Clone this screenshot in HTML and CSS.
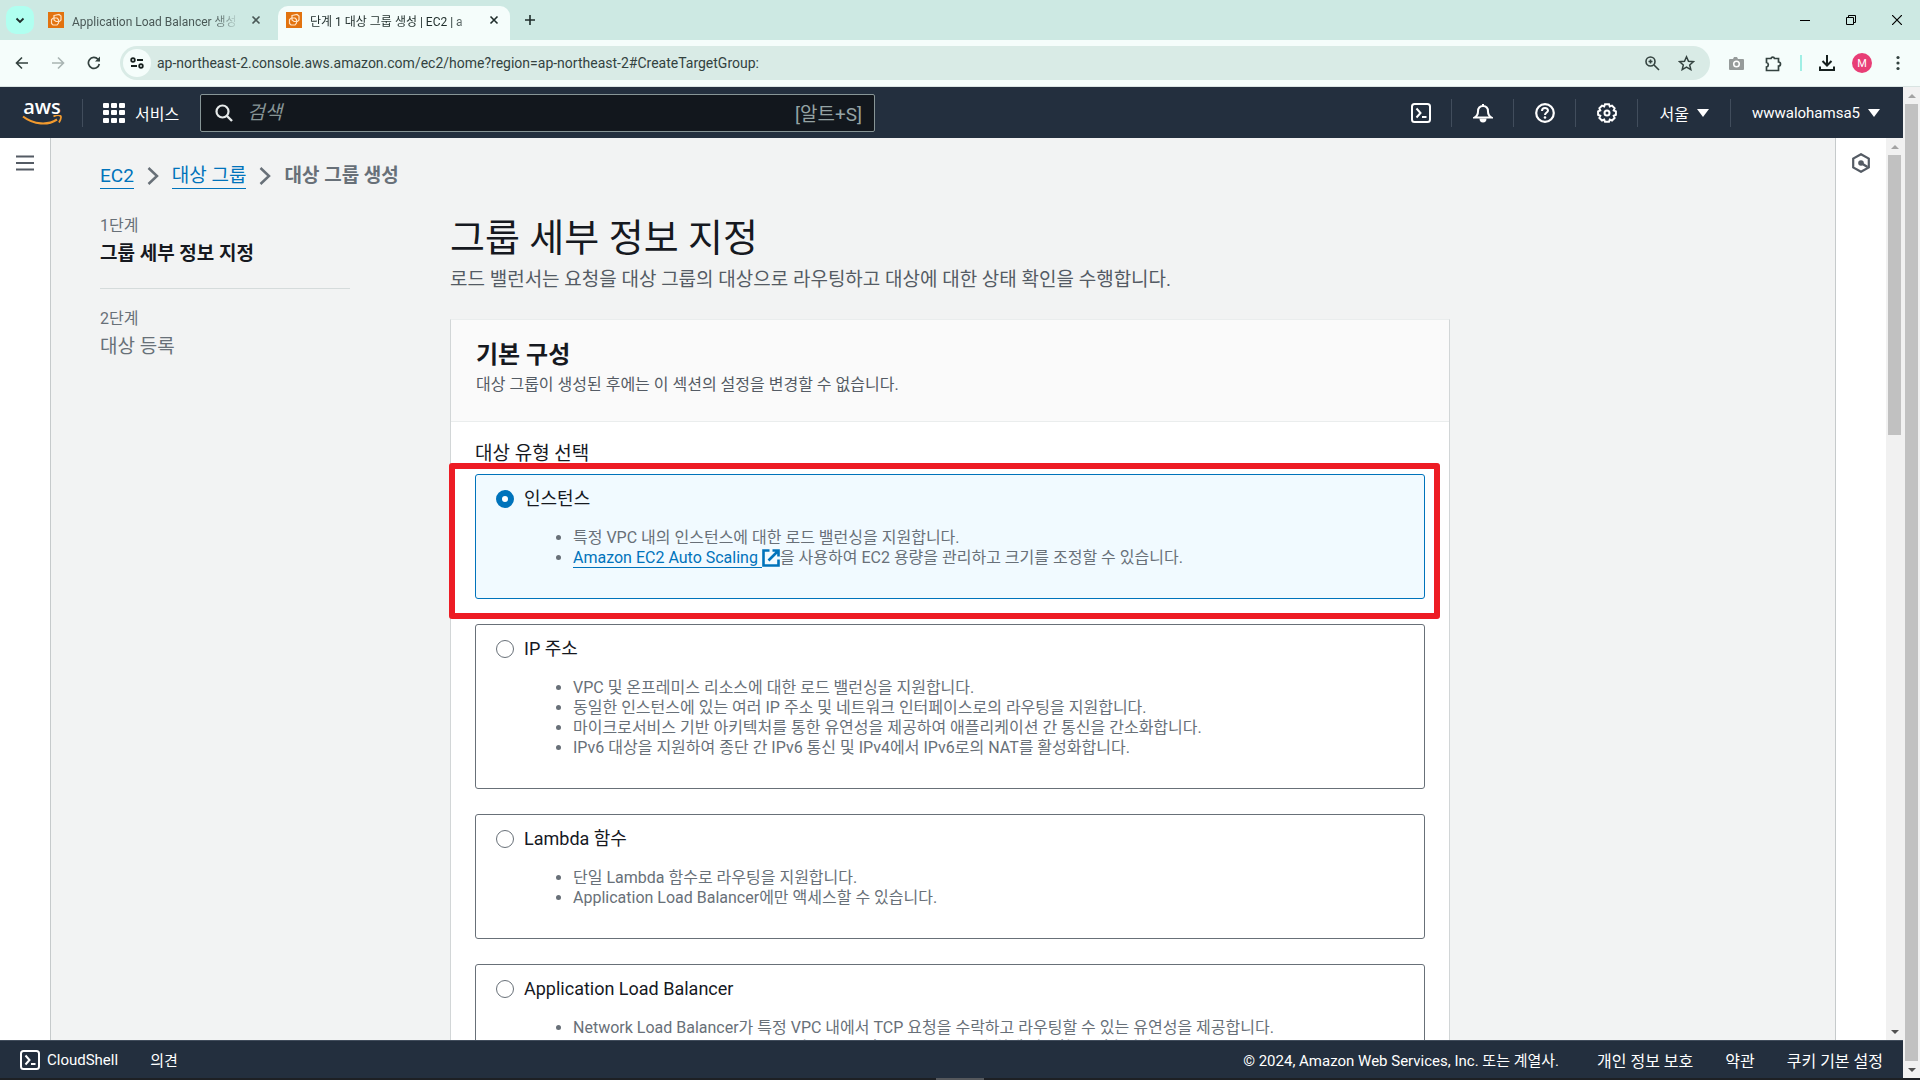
FILE: index.html
```html
<!DOCTYPE html>
<html lang="ko">
<head>
<meta charset="utf-8">
<title>단계 1 대상 그룹 생성 | EC2</title>
<link rel="stylesheet" href="styles.css">
</head>
<body>
<svg class="defs" aria-hidden="true">
  <symbol id="ec2" viewBox="0 0 16 16"><rect width="16" height="16" fill="#e2730f"/><g fill="none" stroke="#ffe3c4" stroke-width="1.2"><path d="M6 3.5 11 2.5 13 4v4l-1.5 1.5H8L6 8z"/><path d="M5.500 6 3.500 7.500v4L5 13h4l1.500-2V7.500L9 6z"/></g></symbol>
  <symbol id="shell" viewBox="0 0 20 20"><g fill="none" stroke="currentColor" stroke-width="2"><rect x="1" y="1" width="18" height="18" rx="2.500"/><path d="m5.500 5.500 4 4.500-4 4.500M11 14h4.500"/></g></symbol>
  <symbol id="x" viewBox="0 0 10 10"><path d="m1.500 1.500 7 7m0-7-7 7" fill="none" stroke="currentColor" stroke-width="1.600"/></symbol>
  <symbol id="chev" viewBox="0 0 12 20"><path d="m1.500 2 8.500 8-8.500 8" fill="none" stroke="currentColor" stroke-width="2.500"/></symbol>
</svg>

<div class="tabstrip">
  <button class="tab-search" aria-label="탭 검색"><svg width="10" height="7" viewBox="0 0 10 7"><path d="m1.500 1.500 3.500 3.500 3.500-3.500" fill="none" stroke="currentColor" stroke-width="1.800"/></svg></button>
  <div class="tab">
    <svg width="16" height="16"><use href="#ec2"/></svg>
    <span class="tab-title">Application Load Balancer 생성</span>
    <button class="tab-close" aria-label="탭 닫기"><svg width="10" height="10"><use href="#x"/></svg></button>
  </div>
  <div class="tab active">
    <svg width="16" height="16"><use href="#ec2"/></svg>
    <span class="tab-title">단계 1 대상 그룹 생성 | EC2 | a</span>
    <button class="tab-close" aria-label="탭 닫기"><svg width="10" height="10"><use href="#x"/></svg></button>
  </div>
  <button class="new-tab" aria-label="새 탭"><svg width="12" height="12" viewBox="0 0 12 12"><path d="M6 1v10M1 6h10" stroke="currentColor" stroke-width="1.600"/></svg></button>
  <div class="window-controls">
    <button aria-label="최소화"><svg width="10" height="10" viewBox="0 0 10 10"><path d="M0 5.500h10" stroke="currentColor"/></svg></button>
    <button aria-label="이전 크기로 복원"><svg width="10" height="10" viewBox="0 0 10 10"><path d="M.5 2.500h7v7h-7zM2.500 2.500v-2h7v7h-2" fill="none" stroke="currentColor"/></svg></button>
    <button aria-label="닫기"><svg width="10" height="10" viewBox="0 0 10 10"><path d="m0 0 10 10M10 0 0 10" stroke="currentColor" stroke-width="1.200"/></svg></button>
  </div>
</div>

<div class="toolbar">
  <button class="tool" aria-label="뒤로"><svg width="14" height="14" viewBox="0 0 14 14"><path d="M13 7H2M7 1.500 1.500 7 7 12.500" fill="none" stroke="currentColor" stroke-width="1.600"/></svg></button>
  <button class="tool dim" aria-label="앞으로"><svg width="14" height="14" viewBox="0 0 14 14"><path d="M1 7h11M7 1.500 12.500 7 7 12.500" fill="none" stroke="currentColor" stroke-width="1.600"/></svg></button>
  <button class="tool" aria-label="새로고침"><svg width="14" height="14" viewBox="0 0 14 14"><path d="M12.300 8A5.500 5.500 0 1 1 11 3.200l1.500 1.600" fill="none" stroke="currentColor" stroke-width="1.700"/><path d="M13 .5v5H8z" fill="currentColor"/></svg></button>
  <div class="omnibox">
    <button class="site-info" aria-label="사이트 정보"><svg width="14" height="12" viewBox="0 0 14 12"><g fill="none" stroke="currentColor" stroke-width="1.800"><circle cx="3" cy="3" r="1.800"/><circle cx="11" cy="9" r="1.800"/><path d="M7 3h6M1 9h6"/></g></svg></button>
    <input class="url" type="text" aria-label="주소창" value="ap-northeast-2.console.aws.amazon.com/ec2/home?region=ap-northeast-2#CreateTargetGroup:">
    <button class="omni-btn" aria-label="확대/축소"><svg width="15" height="15" viewBox="0 0 15 15"><g fill="none" stroke="currentColor" stroke-width="1.600"><circle cx="5.500" cy="5.500" r="4.500"/><path d="m9 9 5 5M5.500 3.500v4M3.500 5.500h4"/></g></svg></button>
    <button class="omni-btn" aria-label="북마크"><svg width="17" height="16" viewBox="0 0 17 16"><path d="m8.500 1.800 2 4.400 4.900.5-3.700 3.200 1.100 4.700-4.300-2.500-4.300 2.500 1.100-4.700L1.600 6.700l4.900-.5z" fill="none" stroke="currentColor" stroke-width="1.500"/></svg></button>
  </div>
  <div class="extensions">
    <button class="tool camera" aria-label="캡처"><svg width="15" height="14" viewBox="0 0 15 14"><path d="M1 3h3l1-2h3l1 2h5a1 1 0 0 1 1 1v9a1 1 0 0 1-1 1H1a1 1 0 0 1-1-1V4a1 1 0 0 1 1-1z" fill="currentColor"/><circle cx="7.500" cy="8" r="2.800" fill="none" stroke="#fff" stroke-width="1.500"/></svg></button>
    <button class="tool" aria-label="확장 프로그램"><svg width="17" height="17" viewBox="0 0 17 17"><path d="M1.500 3.500H6a1.800 1.800 0 0 1 3.500 0h4V7a2 2 0 0 1 0 4v4.500h-12V12a2.300 2.300 0 0 0 0-4.500z" fill="none" stroke="currentColor" stroke-width="1.700"/></svg></button>
    <span class="tool-sep"></span>
    <button class="tool strong" aria-label="다운로드"><svg width="16" height="16" viewBox="0 0 16 16"><path d="M8 0v10M3.500 6 8 10.500 12.500 6M1 11.500V15h14v-3.500" fill="none" stroke="currentColor" stroke-width="2"/></svg></button>
    <button class="avatar" aria-label="프로필">M</button>
    <button class="tool" aria-label="메뉴"><svg width="4" height="16" viewBox="0 0 4 16" fill="currentColor"><circle cx="2" cy="2.500" r="1.600"/><circle cx="2" cy="8" r="1.600"/><circle cx="2" cy="13.500" r="1.600"/></svg></button>
  </div>
</div>

<div class="viewport">
  <div class="console">
    <header class="nav">
      <a class="logo" href="#" aria-label="aws">
        <span class="logo-text">aws</span>
        <svg width="40" height="11" viewBox="0 0 40 11"><path d="M1 1.500c11 8.500 25 9 34 3" fill="none" stroke="#f29a2e" stroke-width="2.200"/><path d="M31.500 1.500c3-1.500 6-1.500 7-.5s0 4-1.500 6.500" fill="none" stroke="#f29a2e" stroke-width="1.800"/></svg>
      </a>
      <span class="sep"></span>
      <button class="services"><svg width="22" height="20" viewBox="0 0 22 20" fill="currentColor"><rect width="6" height="5" rx="1"/><rect x="8" width="6" height="5" rx="1"/><rect x="16" width="6" height="5" rx="1"/><rect y="7" width="6" height="5" rx="1"/><rect x="8" y="7" width="6" height="5" rx="1"/><rect x="16" y="7" width="6" height="5" rx="1"/><rect y="15" width="6" height="5" rx="1"/><rect x="8" y="15" width="6" height="5" rx="1"/><rect x="16" y="15" width="6" height="5" rx="1"/></svg>서비스</button>
      <div class="search">
        <svg width="18" height="18" viewBox="0 0 18 18"><circle cx="7.500" cy="7.500" r="6" fill="none" stroke="currentColor" stroke-width="2.200"/><path d="m12 12 5 5" stroke="currentColor" stroke-width="2.400"/></svg>
        <input type="text" aria-label="검색" placeholder="검색">
        <span class="shortcut">[알트+S]</span>
      </div>
      <div class="nav-right">
        <button class="nav-icon" aria-label="CloudShell"><svg width="20" height="20"><use href="#shell"/></svg></button>
        <span class="sep"></span>
        <button class="nav-icon" aria-label="알림"><svg width="20" height="20" viewBox="0 0 20 20"><path d="M10 1v2M1.500 14.500c2.500-1.500 3.500-3 3.500-6C5 5 7 3 10 3s5 2 5 5.500c0 3 1 4.500 3.500 6z" fill="none" stroke="currentColor" stroke-width="2"/><path d="M6.500 15.500h7a3.500 4 0 0 1-7 0z" fill="currentColor"/></svg></button>
        <span class="sep"></span>
        <button class="nav-icon" aria-label="도움말"><svg width="20" height="20" viewBox="0 0 20 20"><circle cx="10" cy="10" r="8.800" fill="none" stroke="currentColor" stroke-width="2.200"/><path d="M7 8c0-4 6-3.800 6-.5 0 2-3 2-3 4.500" fill="none" stroke="currentColor" stroke-width="2"/><circle cx="10" cy="14.500" r="1.300" fill="currentColor"/></svg></button>
        <span class="sep"></span>
        <button class="nav-icon" aria-label="설정"><svg width="20" height="20" viewBox="0 0 20 20"><path d="M8 1.200h4l.8 2.200 2.200-.8 2.600 2.700-.9 2.200 2.200.9v3.400l-2.200.9.900 2.200-2.600 2.600-2.200-.9-.8 2.200H8l-.8-2.200-2.200.9-2.600-2.600.9-2.200-2.200-.9V8.400l2.200-.9-.9-2.200L5 2.600l2.200.8z" fill="none" stroke="currentColor" stroke-width="2"/><circle cx="10" cy="10" r="2.500" fill="none" stroke="currentColor" stroke-width="2"/></svg></button>
        <span class="sep"></span>
        <button class="nav-text">서울<span class="caret"></span></button>
        <span class="sep"></span>
        <button class="nav-text account">wwwalohamsa5<span class="caret"></span></button>
      </div>
    </header>

    <div class="body">
      <aside class="rail rail-left">
        <button aria-label="탐색 열기"><svg width="18" height="16" viewBox="0 0 18 16"><path d="M0 1.500h18M0 8h18M0 14.500h18" stroke="currentColor" stroke-width="2.200"/></svg></button>
      </aside>
      <main class="main">
        <nav class="crumbs" aria-label="이동 경로">
          <a href="#">EC2</a>
          <svg width="12" height="20"><use href="#chev"/></svg>
          <a href="#">대상 그룹</a>
          <svg width="12" height="20"><use href="#chev"/></svg>
          <strong>대상 그룹 생성</strong>
        </nav>
        <div class="wizard">
          <ol class="steps">
            <li><span class="step-no">1단계</span><strong>그룹 세부 정보 지정</strong></li>
            <li><span class="step-no">2단계</span><span class="step-name">대상 등록</span></li>
          </ol>
          <div class="content">
            <h1>그룹 세부 정보 지정</h1>
            <p class="lead">로드 밸런서는 요청을 대상 그룹의 대상으로 라우팅하고 대상에 대한 상태 확인을 수행합니다.</p>
            <section class="panel">
              <div class="panel-head">
                <h2>기본 구성</h2>
                <p>대상 그룹이 생성된 후에는 이 섹션의 설정을 변경할 수 없습니다.</p>
              </div>
              <fieldset class="types">
                <legend>대상 유형 선택</legend>
                <div class="card selected">
                  <div class="choice"><input type="radio" name="type" id="t1" checked><label for="t1">인스턴스</label></div>
                  <ul>
                    <li>특정 VPC 내의 인스턴스에 대한 로드 밸런싱을 지원합니다.</li>
                    <li><a href="#">Amazon EC2 Auto Scaling </a><svg class="ext" width="18" height="18" viewBox="0 0 18 18"><path d="M7.500 1.500h-6v15h15v-6M10.500 1.500h6v6M16 2 6.500 11.500" fill="none" stroke="currentColor" stroke-width="2.600"/></svg>을 사용하여 EC2 용량을 관리하고 크기를 조정할 수 있습니다.</li>
                  </ul>
                  <div class="highlight"></div>
                </div>
                <div class="card">
                  <div class="choice"><input type="radio" name="type" id="t2"><label for="t2">IP 주소</label></div>
                  <ul>
                    <li>VPC 및 온프레미스 리소스에 대한 로드 밸런싱을 지원합니다.</li>
                    <li>동일한 인스턴스에 있는 여러 IP 주소 및 네트워크 인터페이스로의 라우팅을 지원합니다.</li>
                    <li>마이크로서비스 기반 아키텍처를 통한 유연성을 제공하여 애플리케이션 간 통신을 간소화합니다.</li>
                    <li>IPv6 대상을 지원하여 종단 간 IPv6 통신 및 IPv4에서 IPv6로의 NAT를 활성화합니다.</li>
                  </ul>
                </div>
                <div class="card">
                  <div class="choice"><input type="radio" name="type" id="t3"><label for="t3">Lambda 함수</label></div>
                  <ul>
                    <li>단일 Lambda 함수로 라우팅을 지원합니다.</li>
                    <li>Application Load Balancer에만 액세스할 수 있습니다.</li>
                  </ul>
                </div>
                <div class="card">
                  <div class="choice"><input type="radio" name="type" id="t4"><label for="t4">Application Load Balancer</label></div>
                  <ul>
                    <li>Network Load Balancer가 특정 VPC 내에서 TCP 요청을 수락하고 라우팅할 수 있는 유연성을 제공합니다.</li>
                    <li>Application Load Balancer로 고정 IP 주소 및 PrivateLink를 손쉽게 사용할 수 있습니다.</li>
                  </ul>
                </div>
              </fieldset>
            </section>
          </div>
        </div>
      </main>
      <aside class="rail rail-right">
        <button aria-label="도움말 패널"><svg width="20" height="20" viewBox="0 0 20 20"><path d="m10 1.200 7.800 4.400v8.800L10 18.800l-7.800-4.400V5.600z" fill="none" stroke="currentColor" stroke-width="2.200"/><circle cx="10" cy="10" r="2.800" fill="currentColor"/><path d="m10 10 6.500 4" stroke="currentColor" stroke-width="2.400"/></svg></button>
      </aside>
      <div class="scrollbar inner" aria-hidden="true"><span class="arrow up"></span><span class="thumb"></span><span class="arrow down"></span></div>
    </div>

    <footer class="footer">
      <button class="foot-btn"><svg width="20" height="20"><use href="#shell"/></svg>CloudShell</button>
      <button class="foot-btn">의견</button>
      <div class="legal">
        <span class="copyright">© 2024, Amazon Web Services, Inc. 또는 계열사.</span>
        <a href="#">개인 정보 보호</a>
        <a href="#">약관</a>
        <a href="#">쿠키 기본 설정</a>
      </div>
    </footer>
  </div>
  <div class="scrollbar outer" aria-hidden="true"><span class="arrow up"></span><span class="thumb"></span><span class="arrow down"></span></div>
</div>
<div class="taskbar"><span></span></div>
</body>
</html>
```
FILE: styles.css
```css
* { box-sizing: border-box; }
body {
  margin: 0;
  height: 100vh;
  display: flex;
  flex-direction: column;
  overflow: hidden;
  font-family: Roboto, "Noto Sans CJK KR", sans-serif;
  font-size: 16px;
  font-weight: 400;
  color: #16191f;
}
button, input { font: inherit; color: inherit; }
button { border: 0; padding: 0; background: none; display: flex; align-items: center; justify-content: center; }
input { border: 0; padding: 0; background: none; outline: 0; }
svg { display: block; flex: none; }
h1, h2, p, ul, ol { margin: 0; padding: 0; }
a { color: #0073bb; text-decoration: none; }
.defs { position: absolute; width: 0; height: 0; }

/* Browser tabs */
.tabstrip { flex: none; height: 40px; display: flex; align-items: flex-start; padding: 6px 0 0 6px; background: #cde9e3; color: #1f2d2b; }
.tab-search { width: 28px; height: 28px; border-radius: 10px; background: #b0fff0; }
.tab { width: 238px; height: 28px; display: flex; align-items: center; gap: 8px; padding: 0 8px 0 14px; font-size: 12px; color: #4a5957; }
.tab.active { width: 232px; height: 34px; margin-left: 6px; padding: 0 8px 6px; border-radius: 10px 10px 0 0; background: #f5fdfb; color: #1f2d2b; }
.tab-title { flex: 1; min-width: 0; overflow: hidden; white-space: nowrap; mask-image: linear-gradient(to right, #000 85%, transparent); }
.tab-close { width: 16px; height: 16px; }
.new-tab { width: 28px; height: 28px; margin-left: 6px; }
.window-controls { margin-left: auto; display: flex; }
.window-controls button { width: 46px; height: 28px; color: #000; }

/* Browser toolbar */
.toolbar { flex: none; height: 47px; display: flex; align-items: center; padding: 0 8px; background: #f5fdfb; border-bottom: 1px solid #d9e4e2; color: #33423f; }
.tool { width: 28px; height: 28px; }
.toolbar > .tool { margin-right: 8px; }
.dim { color: #a9b5b3; }
.strong { color: #16201e; }
.camera { color: #969b9a; }
.omnibox { flex: 1; min-width: 0; height: 34px; margin-left: 4px; display: flex; align-items: center; gap: 6px; padding: 0 10px 0 3px; border-radius: 17px; background: #d9ebe6; }
.site-info { width: 28px; height: 28px; border-radius: 50%; background: #f5fdfb; color: #16201e; }
.url { flex: 1; min-width: 0; font-size: 14px; color: #33423f; }
.omni-btn { width: 28px; height: 28px; }
.extensions { display: flex; align-items: center; gap: 9px; padding-left: 12px; }
.tool-sep { width: 2px; height: 16px; margin: 0 2px 0 4px; background: #a0efe5; }
.avatar { width: 20px; height: 20px; margin: 0 3px 0 2px; border-radius: 50%; background: #e83e76; color: #fff; font-size: 11px; }

/* Page frame */
.viewport { flex: 1; min-height: 0; display: flex; }
.console { flex: 1; min-width: 0; display: flex; flex-direction: column; }
.nav { flex: none; height: 51px; display: flex; align-items: center; padding: 0 10px 0 22px; background: #232f3e; color: #fff; }
.logo { width: 40px; color: #fff; display: flex; flex-direction: column; align-items: center; }
.logo-text { font: 600 20px/16px "Open Sans", sans-serif; }
.sep { width: 1px; height: 28px; background: #414d5c; }
.logo + .sep { margin-left: 20px; }
.services { gap: 10px; margin: 0 21px 0 20px; }
.search { width: 675px; height: 38px; display: flex; align-items: center; gap: 14px; padding: 0 12px 0 14px; border: 1px solid #879596; border-radius: 2px; background: #12171d; font-size: 19px; color: #e6eaea; }
.search input { flex: 1; min-width: 0; }
.search input::placeholder { color: #879596; font-style: italic; opacity: 1; }
.shortcut { color: #95a3a4; }
.nav-right { margin-left: auto; display: flex; align-items: center; }
.nav-icon { width: 61px; height: 28px; }
.nav-text { gap: 8px; padding: 0 21px; }
.account { padding-right: 13px; font-size: 15px; }
.caret { border: 6px solid transparent; border-top: 8px solid #fff; border-bottom: 0; }

.body { flex: 1; min-height: 0; display: flex; overflow: hidden; background: #f2f3f3; }
.rail { flex: none; width: 51px; display: flex; justify-content: center; align-items: flex-start; background: #fff; color: #545b64; }
.rail button { height: 20px; margin-top: 15px; }
.rail-left { border-right: 1px solid #c6cacb; }
.rail-right { border-left: 1px solid #c6cacb; }
.main { flex: 1; min-width: 0; overflow: hidden; padding: 24px 50px 0 49px; }

.crumbs { display: flex; align-items: center; gap: 13px; height: 28px; font-size: 19px; line-height: 24px; color: #687078; }
.crumbs a { border-bottom: 1px solid #0073bb; }
.wizard { display: grid; grid-template-columns: 250px minmax(0, 1000px); gap: 100px; margin-top: 20px; }
.steps { list-style: none; color: #687078; font-size: 19px; }
.steps li { padding: 1px 0 18px; }
.steps li + li { padding-top: 15px; border-top: 1px solid #d5dbdb; }
.steps li > * { display: block; line-height: 32px; }
.steps .step-no { font-size: 16px; line-height: 24px; padding-top: 3px; }
.steps strong { color: #16191f; }

h1 { font-size: 38px; line-height: 48px; font-weight: 400; margin-top: 4px; }
.lead { font-size: 19px; line-height: 28px; margin-top: 4px; color: #545b64; }
.panel { margin-top: 25px; background: #fff; border: 1px solid #d2d6d7; border-top-color: #eaeded; }
.panel-head { height: 102px; padding: 19px 25px 0; background: #fafafa; border-bottom: 1px solid #eaeded; }
h2 { font-size: 24px; line-height: 32px; }
.panel-head p { line-height: 28px; color: #545b64; }
.types { border: 0; margin: 0; padding: 20px 24px 0; }
.types legend { float: left; width: 100%; padding: 0; font-size: 19px; line-height: 24px; margin-bottom: 8px; }
.card { position: relative; clear: both; margin-bottom: 25px; padding: 8px 20px 30px; border: 1px solid #687078; border-radius: 3px; }
.card.selected { border-color: #0073bb; background: #f1faff; }
.choice { display: flex; align-items: center; gap: 10px; font-size: 18px; line-height: 32px; }
.choice input { appearance: none; width: 18px; height: 18px; margin: 0; border: 1px solid #687078; border-radius: 50%; background: #fff; }
.choice input:checked { border: 6px solid #0073bb; }
.card ul { margin-top: 13px; padding-left: 77px; color: #687078; }
.card li { line-height: 20px; }
.card li a { border-bottom: 1px solid #0073bb; white-space: pre; }
.ext { display: inline-block; vertical-align: -4px; color: #0073bb; }
.highlight { position: absolute; inset: -12px -16px -21px -27px; border: 6px solid #ed1c24; border-radius: 3px; pointer-events: none; z-index: 1; }

.footer { flex: none; height: 38px; display: flex; align-items: center; gap: 32px; padding: 0 20px; background: #232f3e; border-top: 1px solid #414d5c; color: #fff; }
.foot-btn { gap: 7px; font-size: 15px; }
.legal { margin-left: auto; display: flex; align-items: center; gap: 32px; }
.legal a { color: #fff; }
.copyright { margin-right: 6px; font-size: 15px; }

/* Scrollbars */
.scrollbar { flex: none; width: 17px; display: flex; flex-direction: column; align-items: center; background: #f1f1f1; }
.thumb { width: 13px; background: #c1c1c1; }
.inner .thumb { height: 31%; }
.outer .thumb { flex: 1; }
.arrow { flex: none; height: 17px; display: flex; align-items: center; }
.arrow::before { content: ""; border: 4px solid transparent; }
.up::before { border-top: 0; border-bottom-color: #a3a3a3; }
.down::before { border-bottom: 0; border-top-color: #505050; }
.inner .down { margin-top: auto; }
.taskbar { flex: none; height: 2px; background: #1d2024; display: flex; justify-content: center; }
.taskbar span { width: 48px; background: #55585c; }
```
